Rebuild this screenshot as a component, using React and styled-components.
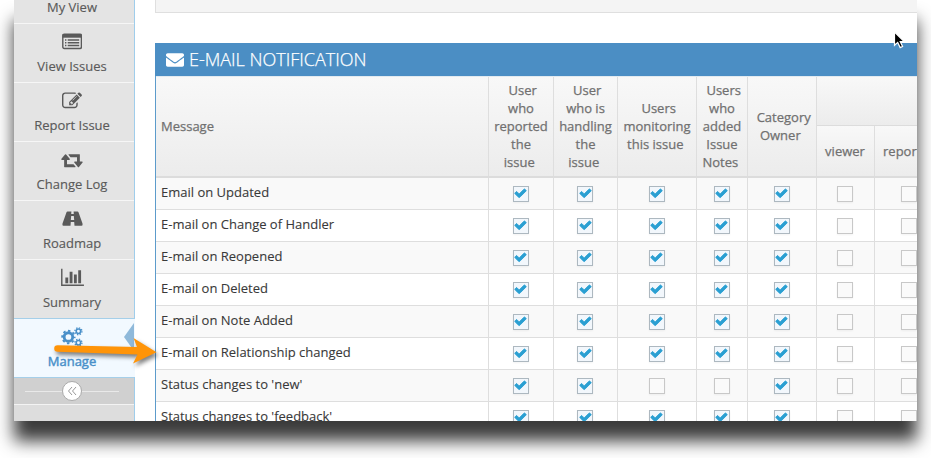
import React from "react";
import styled, { createGlobalStyle, css } from "styled-components";
import { FaEnvelope } from "react-icons/fa";

const GlobalStyle = createGlobalStyle`
  * { box-sizing: border-box; }
  html, body { margin: 0; background: #fff; overflow: hidden; }
  body { font-family: "Open Sans", sans-serif; font-size: 13px; color: #393939; }
`;

const Stage = styled.div`
  position: relative;
  width: 931px;
  height: 458px;
  padding: 0 14px;
  overflow: hidden;
`;

const Window = styled.div`
  display: flex;
  width: 903px;
  height: 421px;
  overflow: hidden;
  background: #fff;
`;

const WindowShadow = styled.div`
  width: 903px;
  height: 421px;
  box-shadow: 0 20px 16px rgba(0, 0, 0, 0.77);
`;

const Sidebar = styled.nav`
  flex: none;
  width: 121px;
  height: 421px;
  background: #ddd;
  border-right: 1px solid #9fcdeb;
`;

const NavItem = styled.a`
  position: relative;
  display: flex;
  flex-direction: column;
  align-items: center;
  height: 59px;
  padding: 8px ${(p) => (p.$active ? "5px" : "4px")} 0 0;
  margin-right: ${(p) => (p.$active ? "-1px" : "0")};
  background: ${(p) => (p.$active ? "#f2f9ff" : "#e4e4e4")};
  border-top: 1px solid ${(p) => (p.$active ? "#a5cfe9" : "#f6f6f6")};
  color: ${(p) => (p.$active ? "#4a90c9" : "#5a5a5a")};

  svg { display: block; height: 20px; }
`;

const FirstNavItem = styled(NavItem)`
  height: 23px;
  padding-top: 0;
  border-top: 0;
`;

const NavLabel = styled.span`
  line-height: 18px;
  margin-top: ${(p) => (p.$first ? "-2px" : "5px")};
  font-size: 13px;
  -webkit-text-stroke: ${(p) => (p.$active ? "0.45px" : "0.15px")};
`;

const ActiveNotch = styled.i`
  position: absolute;
  right: 1px;
  top: 4px;
  width: 10px;
  height: 28px;
  background: #8fb9da;
  clip-path: polygon(100% 0, 100% 100%, 0 50%);
`;

const CollapseBar = styled.div`
  display: flex;
  align-items: center;
  height: 28px;
  padding: 0 15px 0 11px;
  background: #d0d0d0;
  border-top: 1px solid #a5cfe9;
  border-bottom: 1px solid #f3f3f3;
`;

const CollapseLine = styled.i`
  flex: 1;
  height: 1px;
  background: #e9e9e9;
`;

const CollapseButton = styled.span`
  display: grid;
  place-items: center;
  width: 20px;
  height: 20px;
  border: 1px solid #aaa;
  border-radius: 50%;
  background: #fff;
`;

const Main = styled.main`
  flex: none;
  width: 782px;
  padding-left: 20px;
`;

const PreviousPanel = styled.div`
  height: 13px;
  background: #f4f4f4;
  border: solid #dfdfdf;
  border-width: 0 0 1px 1px;
`;

const Widget = styled.section`
  margin-top: 30px;
  width: 800px;
  border-left: 1px solid #5c9bcb;
`;

const WidgetTitle = styled.h4`
  display: flex;
  align-items: center;
  height: 33px;
  margin: 0 0 0 -1px;
  padding: 0 0 2px 11px;
  gap: 5px;
  background: #4b8ec4;
  color: #fff;
  font-size: 18px;
  font-weight: 300;
  -webkit-text-stroke: 0.25px;
  svg { margin-top: 3px; }
`;

const columns = "333px 65px 64px 79px 51px 69px 58px 69px";

const HeadRow = styled.div`
  display: grid;
  grid-template-columns: ${columns};
  grid-template-rows: 49px 50px;
  height: 102px;
  border-top: 1px solid #e2eaf0;
  border-bottom: 2px solid #dcdcdc;
  background: linear-gradient(#f8f8f8, #ececec);
`;

const HeadCell = styled.div`
  display: flex;
  align-items: center;
  justify-content: ${(p) => (p.$left ? "flex-start" : "center")};
  grid-row: ${(p) => (p.$sub ? "2" : "1 / 3")};
  padding: 0 0 ${(p) => (p.$sub ? "0" : "2px")} ${(p) => (p.$left ? "5px" : "0")};
  border-right: 1px solid #dedede;
  color: #707070;
  font-size: 13px;
  line-height: 18px;
  text-align: center;
  white-space: pre;
  -webkit-text-stroke: 0.25px;
  ${(p) => p.$sub && css`
    padding-right: 1px;
    background: linear-gradient(#f8f8f8, #ececec);
  `}
`;

const GroupCell = styled.div`
  grid-column: 7 / 9;
  grid-row: 1;
  border-bottom: 1px solid #dcdcdc;
  background: linear-gradient(#f8f8f8, #ececec);
`;

const Row = styled.div`
  display: grid;
  grid-template-columns: ${columns};
  height: 32px;
  border-bottom: 1px solid #dedede;
  background: ${(p) => (p.$odd ? "#f9f9f9" : "#fff")};
`;

const Cell = styled.div`
  display: flex;
  justify-content: center;
  padding: 8px 1px 0 0;
  border-right: 1px solid #dedede;
`;

const MessageCell = styled.div`
  padding: 5px 0 0 5px;
  border-right: 1px solid #dedede;
  font-size: 13px;
  line-height: 18px;
  white-space: nowrap;
  -webkit-text-stroke: 0.1px;
`;

const CheckBox = styled.span`
  display: flex;
  justify-content: center;
  width: 16px;
  height: 16px;
  border: 1px solid ${(p) => (p.$checked ? "#adb8c0" : "#c8c8c8")};
  background: ${(p) => (p.$checked ? "#f2f7fc" : "#fafafa")};
  box-shadow: 0 1px 2px rgba(0, 0, 0, 0.05);
`;

const AnnotationArrow = styled.svg`
  position: absolute;
  left: 48px;
  top: 330px;
  filter: drop-shadow(2px 3px 2px rgba(0, 0, 0, 0.5));
`;

const Cursor = styled.svg`
  position: absolute;
  left: 892px;
  top: 29px;
`;

const ListIcon = () => (
  <svg width="20" height="20" viewBox="0 0 20 20" fill="none" stroke="currentColor">
    <rect x="0.8" y="2.2" width="18.6" height="14.3" rx="1.4" strokeWidth="1.4" />
    <path d="M.5 4h19" strokeWidth="3.4" />
    <path d="M3 8h1.4M3 10.8h1.4M3 13.5h1.4M5.7 8h11.5M5.7 10.8h11.5M5.7 13.5h11.5" strokeWidth="1.4" />
  </svg>
);

const EditIcon = () => (
  <svg width="20" height="20" viewBox="0 0 1792 1792" fill="currentColor">
    <path d="M888 1184l116-116-152-152-116 116v56h96v96h56zm440-720q-16-16-33 1l-350 350q-17 17-1 33t33-1l350-350q17-17 1-33zm80 594v190q0 119-84.5 203.5t-203.5 84.5h-832q-119 0-203.5-84.5t-84.5-203.5v-832q0-119 84.5-203.5t203.5-84.5h832q63 0 117 25 15 7 18 23 3 17-9 29l-49 49q-14 14-32 8-23-6-45-6h-832q-66 0-113 47t-47 113v832q0 66 47 113t113 47h832q66 0 113-47t47-113v-126q0-13 9-22l64-64q15-15 35-7t20 29zm-96-738l288 288-672 672h-288v-288zm444 132l-92 92-288-288 92-92q28-28 68-28t68 28l152 152q28 28 28 68t-28 68z" />
  </svg>
);

const RetweetIcon = () => (
  <svg width="22" height="20" viewBox="0 0 1920 1792" fill="currentColor">
    <path d="M1280 1504q0 13-9.5 22.5t-22.5 9.5h-960q-8 0-13.5-2t-9-7-5.5-8-3-11.5-1-11.5v-13-11-160-416h-192q-26 0-45-19t-19-45q0-24 15-41l320-384q19-22 49-22t49 22l320 384q15 17 15 41 0 26-19 45t-45 19h-192v384h576q16 0 25 11l160 192q7 10 7 21zm640-416q0 24-15 41l-320 384q-20 23-49 23t-49-23l-320-384q-15-17-15-41 0-26 19-45t45-19h192v-384h-576q-16 0-25-12l-160-192q-7-9-7-20 0-13 9.5-22.5t22.5-9.5h960q8 0 13.5 2t9 7 5.5 8 3 11.5 1 11.5v13 11 160 416h192q26 0 45 19t19 45z" />
  </svg>
);

const RoadIcon = () => (
  <svg width="21" height="20" viewBox="0 0 21 20" fill="currentColor" fillRule="evenodd">
    <path d="M5.5 2.5H9.4L9.2 5H11.8L11.6 2.5H15.5Q16.2 2.5 16.5 3.3L20.5 14.5Q21 16.8 19.7 16.8H12.5L12.2 13H8.8L8.5 16.8H1.3Q0 16.8.5 14.5L4.5 3.3Q4.8 2.5 5.5 2.5ZM9.2 7L8.8 11H12.2L11.8 7Z" />
  </svg>
);

const ChartIcon = () => (
  <svg width="23" height="20" viewBox="0 0 2048 1792" fill="currentColor">
    <path d="M640 896v512h-256v-512h256zm384-512v1024h-256v-1024h256zm1024 1152v128h-2048v-1536h128v1408h1920zm-640-896v768h-256v-768h256zm384-384v1152h-256v-1152h256z" transform="translate(0 -50)" />
  </svg>
);

const GearsIcon = () => (
  <svg width="22" height="20" viewBox="0 0 1920 1792" fill="none" stroke="currentColor">
    <circle cx="640" cy="896" r="383" strokeWidth="254" />
    <circle cx="640" cy="896" r="560" strokeWidth="160" strokeDasharray="219.9 219.9" strokeDashoffset="110" />
    <circle cx="1536" cy="384" r="200" strokeWidth="145" />
    <circle cx="1536" cy="384" r="315" strokeWidth="120" strokeDasharray="123.7 123.7" />
    <circle cx="1536" cy="1408" r="200" strokeWidth="145" />
    <circle cx="1536" cy="1408" r="315" strokeWidth="120" strokeDasharray="123.7 123.7" />
  </svg>
);

const CheckIcon = () => (
  <svg width="13" height="13" viewBox="0 60 1792 1792" fill="#2a9fd2" stroke="#2a9fd2" strokeWidth="120">
    <path d="M1671 566q0 40-28 68l-724 724-136 136q-28 28-68 28t-68-28l-136-136-362-362q-28-28-28-68t28-68l136-136q28-28 68-28t68 28l294 295 656-657q28-28 68-28t68 28l136 136q28 28 28 68z" />
  </svg>
);

const navItems = [
  { label: "View Issues", icon: <ListIcon /> },
  { label: "Report Issue", icon: <EditIcon /> },
  { label: "Change Log", icon: <RetweetIcon /> },
  { label: "Roadmap", icon: <RoadIcon /> },
  { label: "Summary", icon: <ChartIcon /> },
  { label: "Manage", icon: <GearsIcon />, active: true },
];

const headings = [
  "\u00a0User\nwho\nreported\nthe\nissue\u00a0",
  "\u00a0User\nwho is\nhandling\nthe\nissue\u00a0",
  "\u00a0Users\nmonitoring\nthis issue\u00a0",
  "\u00a0Users\nwho\nadded\nIssue\nNotes\u00a0",
  "\u00a0Category\nOwner\u00a0",
];

const rows = [
  ["Email on Updated", "1111100"],
  ["E-mail on Change of Handler", "1111100"],
  ["E-mail on Reopened", "1111100"],
  ["E-mail on Deleted", "1111100"],
  ["E-mail on Note Added", "1111100"],
  ["E-mail on Relationship changed", "1111100"],
  ["Status changes to 'new'", "1100100"],
  ["Status changes to 'feedback'", "1111100"],
];

export default function App() {
  return (
    <Stage>
      <GlobalStyle />
      <WindowShadow>
        <Window>
          <Sidebar>
            <FirstNavItem><NavLabel $first>My View</NavLabel></FirstNavItem>
            {navItems.map((item) => (
              <NavItem key={item.label} $active={item.active}>
                {item.icon}
                <NavLabel $active={item.active}>{item.label}</NavLabel>
                {item.active && <ActiveNotch />}
              </NavItem>
            ))}
            <CollapseBar>
              <CollapseLine />
              <CollapseButton>
                <svg width="10" height="10" viewBox="0 0 10 10" fill="none" stroke="#999" strokeWidth="1">
                  <path d="M5 1L1.5 5L5 9M9 1L5.5 5L9 9" />
                </svg>
              </CollapseButton>
              <CollapseLine />
            </CollapseBar>
          </Sidebar>
          <Main>
            <PreviousPanel />
            <Widget>
              <WidgetTitle><FaEnvelope size={18} />E-MAIL NOTIFICATION</WidgetTitle>
              <HeadRow>
                <HeadCell $left>Message</HeadCell>
                {headings.map((text, i) => <HeadCell key={i}>{text}</HeadCell>)}
                <GroupCell />
                <HeadCell $sub>viewer</HeadCell>
                <HeadCell $sub>reporter</HeadCell>
              </HeadRow>
              {rows.map(([message, flags], r) => (
                <Row key={message} $odd={r % 2 === 0}>
                  <MessageCell>{message}</MessageCell>
                  {[...flags].map((flag, i) => (
                    <Cell key={i}>
                      <CheckBox $checked={flag === "1"}>{flag === "1" && <CheckIcon />}</CheckBox>
                    </Cell>
                  ))}
                </Row>
              ))}
            </Widget>
          </Main>
        </Window>
      </WindowShadow>
      <AnnotationArrow width="114" height="44" viewBox="48 330 114 44">
        <path d="M57.5 345.2L137 347L133.5 338L156.5 352.3L133 363.5L137.5 354.6L57.5 351.8A3.3 3.3 0 0 1 57.5 345.2Z" fill="#ff9408" />
      </AnnotationArrow>
      <Cursor width="15" height="22" viewBox="0 0 15 22">
        <path d="M2.5 3V16.3L5.7 13.4L8.2 18.6L10.6 17.5L8.2 12.5H12.2Z" fill="#000" stroke="#fff" strokeWidth="1.2" />
      </Cursor>
    </Stage>
  );
}
